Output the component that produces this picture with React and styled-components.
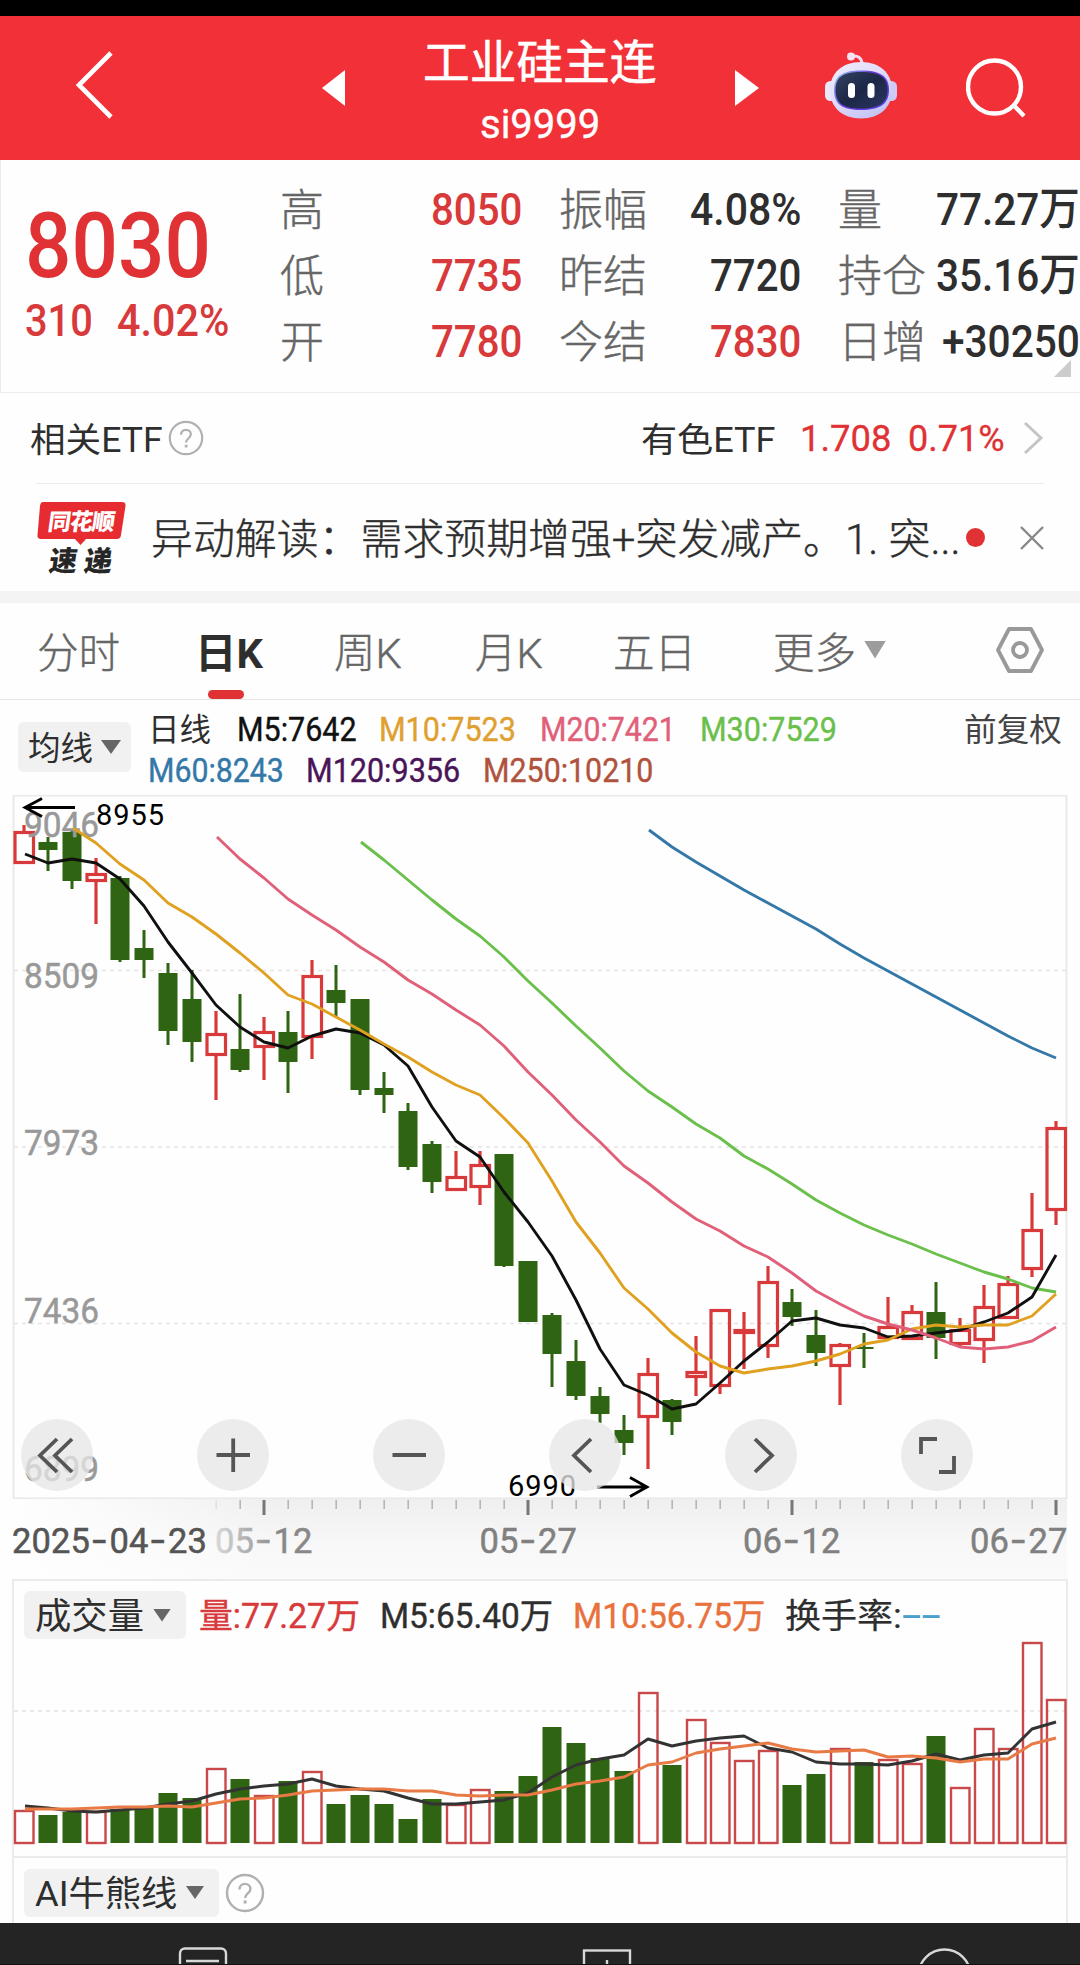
import React, { useLayoutEffect, useRef } from "react";
import styled, { createGlobalStyle } from "styled-components";

const RED = "#e03134";
const UP = "#d8393b";
const DOWN = "#2f6412";
const INK = "#2e2e2e";
const FONT = 'Roboto, "Noto Sans CJK SC", sans-serif';

const Global = createGlobalStyle`
  * { box-sizing: border-box; }
  body { margin: 0; background: #fff; font-family: ${FONT}; }
  svg { display: block; }
`;

const Page = styled.div`
  width: 1080px;
  height: 1965px;
  overflow: hidden;
  display: flex;
  flex-direction: column;
  background: #fefefe;
  color: ${INK};
`;

/* Text condensed or widened to a given advance width */
const FitBox = styled.span`
  display: block;
  flex: none;
  width: ${(p) => p.$w}px;
  font-size: ${(p) => p.$size}px;
  font-weight: ${(p) => p.$weight || 400};
  line-height: ${(p) => p.$lh || 44}px;
  color: ${(p) => p.$color || "inherit"};
  margin-left: ${(p) => p.$ml || 0}px;
  padding-top: ${(p) => p.$drop || 0}px;
  -webkit-text-stroke: ${(p) => p.$stroke || 0}px;
  white-space: pre;
`;
const FitInner = styled.span`
  display: inline-block;
  transform-origin: 0 50%;
`;
function Fit({ w, size, weight, lh, color, ml, drop, stroke, children }) {
  const ref = useRef(null);
  useLayoutEffect(() => {
    const el = ref.current;
    el.style.transform = `scaleX(${w / el.offsetWidth})`;
  }, [w, children]);
  return (
    <FitBox $w={w} $size={size} $weight={weight} $lh={lh} $color={color} $ml={ml} $drop={drop} $stroke={stroke}>
      <FitInner ref={ref}>{children}</FitInner>
    </FitBox>
  );
}

/* ---------- header ---------- */
const StatusStrip = styled.div`
  height: 16px;
  flex: none;
  background: #000;
`;
const Header = styled.header`
  height: 144px;
  flex: none;
  background: #f23038;
  color: #fff;
  display: grid;
  grid-template-columns: 322px 23px 390px 24px 66px 72px 69px 1fr;
  align-items: center;
`;
const BackIcon = styled.svg`
  margin-left: 74px;
  margin-top: -6px;
`;
const TitleBlock = styled.div`
  align-self: start;
  padding-top: 22px;
  display: flex;
  flex-direction: column;
  align-items: center;
  gap: 14px;
`;
const SearchIcon = styled.svg`
  grid-column: 8;
`;
const RobotIcon = styled.svg`
  grid-column: 6;
  margin-top: -6px;
`;

/* ---------- quote ---------- */
const Quote = styled.section`
  position: relative;
  height: 233px;
  flex: none;
  border-bottom: 1px solid #ededed;
  border-left: 1px solid #ececec;
  display: grid;
  grid-template-columns: 279px 242px 37px 242px 37px 242px;
`;
const PriceBlock = styled.div`
  padding: 46px 0 0 24px;
`;
const ChangeRow = styled.div`
  display: flex;
  margin-top: 13px;
`;
const StatColumn = styled.div`
  padding-top: 17px;
  grid-column: ${(p) => p.$col};
`;
const StatRow = styled.div`
  height: 66px;
  display: flex;
  align-items: center;
  justify-content: space-between;
`;
const StatLabel = styled.span`
  font-size: 44px;
  font-weight: 300;
  line-height: 60px;
  padding-top: 2px;
  -webkit-text-stroke: 0.4px;
  color: #666;
  white-space: nowrap;
`;
const Corner = styled.i`
  position: absolute;
  right: 9px;
  bottom: 15px;
  border-left: 17px solid transparent;
  border-bottom: 17px solid #ccc;
`;

/* ---------- related / news ---------- */
const EtfRow = styled.section`
  height: 91px;
  flex: none;
  margin: 0 36px;
  border-bottom: 1px solid #ececec;
  display: flex;
  align-items: center;
`;
const Shift = styled.div`
  display: flex;
  align-items: center;
  margin-left: ${(p) => p.$x || 0}px;
`;
const Spacer = styled.div`
  flex: 1;
`;
const NewsRow = styled.section`
  height: 107px;
  flex: none;
  display: flex;
  align-items: center;
  padding: 0 36px;
`;
const Dot = styled.i`
  width: 19px;
  height: 19px;
  border-radius: 50%;
  background: ${RED};
  margin-left: 6px;
`;
const Band = styled.div`
  height: 12px;
  flex: none;
  background: #f4f4f4;
`;

/* ---------- tabs ---------- */
const Tabs = styled.nav`
  height: 97px;
  flex: none;
  border-bottom: 1px solid #e6e6e6;
  padding-left: 37px;
  display: grid;
  grid-template-columns: 158px 139px 141px 138px 160px 223px 1fr;
`;
const Tab = styled.div`
  position: relative;
  display: flex;
  align-items: center;
  padding-bottom: 3px;
  font-size: 41.5px;
  white-space: nowrap;
  font-weight: ${(p) => (p.$on ? 700 : 300)};
  -webkit-text-stroke: ${(p) => (p.$on ? 0 : 0.4)}px;
  color: ${(p) => (p.$on ? INK : "#666")};
  &::after {
    content: "";
    display: ${(p) => (p.$on ? "block" : "none")};
    position: absolute;
    left: 13px;
    bottom: 0;
    width: 36px;
    height: 9px;
    border-radius: 5px;
    background: ${RED};
  }
`;
const Caret = styled.i`
  flex: none;
  width: ${(p) => p.$w}px;
  height: ${(p) => p.$h}px;
  margin-left: ${(p) => p.$ml}px;
  background: ${(p) => p.$c || "#666"};
  clip-path: polygon(0 0, 100% 0, 50% 100%);
`;

/* ---------- averages ---------- */
const Averages = styled.section`
  height: 95px;
  flex: none;
  display: flex;
  align-items: flex-start;
  padding-left: 18px;
`;
const Picker = styled.button`
  flex: none;
  display: flex;
  align-items: center;
  border: 0;
  border-radius: 6px;
  background: #f1f1f1;
  font-family: inherit;
  text-align: left;
  color: ${INK};
  padding: 0 0 0 ${(p) => p.$pad}px;
  width: ${(p) => p.$w}px;
  height: ${(p) => p.$h}px;
  margin-top: ${(p) => p.$mt || 0}px;
`;
const Legend = styled.div`
  padding-top: 10px;
  margin-left: 17px;
  flex: 1;
`;
const LegendLine = styled.div`
  display: flex;
  height: 41px;
`;

/* ---------- charts ---------- */
const KChart = styled.section`
  position: relative;
  height: 704px;
  flex: none;
`;
const Controls = styled.div`
  position: absolute;
  left: 21px;
  bottom: 8px;
  display: flex;
  gap: 104px;
`;
const RoundButton = styled.button`
  width: 72px;
  height: 72px;
  padding: 0;
  border: 0;
  border-radius: 50%;
  background: rgba(230, 230, 230, 0.77);
`;
const Axis = styled.div`
  height: 80px;
  flex: none;
  margin: 0 13px;
  background: linear-gradient(90deg, #fefefe 0, rgba(254, 254, 254, 0.6) 120px, rgba(254, 254, 254, 0) 260px),
    linear-gradient(180deg, #efefef 0, #f8f8f8 60%, #fafafa 100%);
`;
const Panel = styled.section`
  flex: none;
  margin: 0 12px 0 12px;
  height: ${(p) => p.$h}px;
  border: 2px solid #ebebeb;
  border-bottom: 0;
`;
const PanelHead = styled.div`
  display: flex;
  align-items: center;
  padding: ${(p) => p.$pt}px 0 0 10px;
  height: 59px;
`;
const BottomBar = styled.footer`
  flex: none;
  height: 42px;
  background: #242424;
  border-bottom: 1px solid #111;
`;

/* [up, high, bodyTop, bodyBottom, low, volumeTop] */
const candles = [
  [1, 825, 831, 864, 864, 1810], [0, 837, 842, 850, 871, 1815], [0, 829, 832, 881, 889, 1812],
  [1, 858, 873, 882, 924, 1811], [0, 876, 878, 960, 962, 1809], [0, 930, 948, 960, 978, 1808],
  [0, 963, 973, 1031, 1045, 1793], [0, 970, 999, 1042, 1062, 1798], [1, 1011, 1033, 1056, 1100, 1768],
  [0, 994, 1049, 1070, 1072, 1779], [1, 1017, 1031, 1048, 1080, 1795], [0, 1011, 1032, 1062, 1093, 1781],
  [1, 960, 975, 1038, 1059, 1771], [0, 965, 990, 1003, 1017, 1804], [0, 999, 999, 1090, 1095, 1795],
  [0, 1072, 1088, 1095, 1113, 1804], [0, 1103, 1111, 1167, 1170, 1819], [0, 1141, 1144, 1182, 1193, 1799],
  [1, 1151, 1176, 1191, 1191, 1804], [1, 1151, 1164, 1188, 1205, 1789], [0, 1154, 1154, 1266, 1267, 1791],
  [0, 1261, 1261, 1322, 1322, 1776], [0, 1313, 1315, 1354, 1387, 1727], [0, 1340, 1361, 1396, 1400, 1743],
  [0, 1387, 1396, 1414, 1423, 1758], [0, 1415, 1430, 1443, 1455, 1771], [1, 1358, 1373, 1418, 1469, 1692],
  [0, 1399, 1400, 1422, 1435, 1765], [1, 1336, 1371, 1378, 1396, 1719], [1, 1309, 1309, 1387, 1394, 1742],
  [1, 1312, 1329, 1334, 1369, 1760], [1, 1266, 1281, 1347, 1358, 1750], [0, 1289, 1302, 1317, 1326, 1785],
  [0, 1310, 1335, 1353, 1366, 1774], [1, 1343, 1344, 1367, 1405, 1748], [0, 1333, 1347, 1349, 1368, 1762],
  [1, 1297, 1326, 1339, 1339, 1759], [1, 1305, 1311, 1340, 1340, 1763], [0, 1282, 1312, 1338, 1359, 1736],
  [1, 1318, 1329, 1345, 1346, 1787], [1, 1285, 1306, 1341, 1363, 1728], [1, 1276, 1283, 1319, 1319, 1748],
  [1, 1193, 1229, 1270, 1277, 1642], [1, 1121, 1127, 1211, 1225, 1699],
];

const averages = [
  { color: "#3478a8", from: 26, y: [830, 847, 862, 876, 890, 903, 916, 929, 944, 958, 971, 984, 997, 1010, 1023, 1036, 1048, 1058] },
  { color: "#6bbf4b", from: 14, y: [842, 860, 880, 900, 919, 936, 957, 981, 1003, 1026, 1048, 1071, 1091, 1107, 1124, 1138, 1156, 1169, 1184, 1200, 1213, 1225, 1235, 1244, 1254, 1263, 1272, 1279, 1288, 1292] },
  { color: "#101010", from: 0, y: [854, 863, 859, 863, 879, 906, 942, 973, 1005, 1027, 1042, 1048, 1036, 1029, 1033, 1045, 1066, 1107, 1141, 1157, 1192, 1222, 1256, 1300, 1349, 1385, 1395, 1409, 1404, 1383, 1361, 1342, 1321, 1318, 1325, 1328, 1337, 1336, 1333, 1330, 1322, 1313, 1297, 1255] },
  { color: "#e0a020", from: 2, y: [828, 843, 864, 880, 903, 917, 934, 953, 973, 995, 1004, 1017, 1030, 1044, 1057, 1072, 1085, 1095, 1118, 1143, 1181, 1222, 1253, 1288, 1309, 1333, 1352, 1366, 1373, 1369, 1366, 1361, 1354, 1344, 1340, 1329, 1325, 1327, 1325, 1325, 1316, 1294] },
  { color: "#e0607a", from: 8, y: [837, 859, 878, 899, 915, 930, 947, 962, 980, 994, 1010, 1025, 1046, 1072, 1095, 1120, 1142, 1166, 1183, 1202, 1219, 1231, 1246, 1257, 1273, 1291, 1304, 1316, 1324, 1330, 1338, 1347, 1349, 1347, 1341, 1327] },
];
const volumeAverages = [
  { color: "#333", from: 0, y: [1806, 1808, 1811, 1812, 1810, 1808, 1804, 1801, 1794, 1789, 1786, 1784, 1779, 1786, 1789, 1791, 1798, 1804, 1804, 1802, 1800, 1793, 1777, 1765, 1759, 1755, 1739, 1746, 1741, 1738, 1736, 1748, 1752, 1762, 1764, 1764, 1765, 1761, 1754, 1760, 1755, 1753, 1729, 1722] },
  { color: "#e87a45", from: 0, y: [1809, 1809, 1809, 1808, 1807, 1807, 1806, 1807, 1803, 1799, 1798, 1795, 1791, 1790, 1789, 1789, 1791, 1791, 1795, 1796, 1795, 1795, 1790, 1784, 1781, 1777, 1765, 1762, 1753, 1749, 1746, 1743, 1749, 1752, 1751, 1750, 1757, 1756, 1758, 1762, 1759, 1759, 1744, 1738] },
];
const cx = (i) => 24 + 24 * i;

const Lines = ({ data }) =>
  data.map((l) => (
    <polyline
      key={l.color}
      fill="none"
      stroke={l.color}
      strokeWidth="2.9"
      strokeLinejoin="round"
      points={l.y.map((y, k) => `${cx(l.from + k) + (k === 0 ? 1 : 0)},${y}`).join(" ")}
    />
  ));

const Candle = ({ i, d }) => {
  const [up, hi, top, bot, lo] = d;
  const x = cx(i);
  if (!up)
    return (
      <g fill={DOWN}>
        <rect x={x - 1.5} y={hi} width="3" height={lo - hi} />
        <rect x={x - 9.5} y={top} width="19" height={bot - top} />
      </g>
    );
  return (
    <g stroke={UP} strokeWidth="3.2" fill="none">
      <path d={`M${x} ${hi}V${top}M${x} ${bot}V${lo}`} />
      <rect x={x - 9} y={top + 1.5} width="18.5" height={Math.max(bot - top - 3, 1)} />
    </g>
  );
};

const AxisLabel = ({ x, text, fill }) => (
  <text y="1553" fontFamily="Roboto" fontSize="34.5" fontWeight="400" fill={fill} stroke={fill} strokeWidth="0.5">
    {[...text].map((c, k) =>
      c === "-" ? (
        <tspan key={k} x={x + k * 19.5 + 0.5} fontFamily="Inter" fontSize="38">{c}</tspan>
      ) : (
        <tspan key={k} x={x + k * 19.5}>{c}</tspan>
      )
    )}
  </text>
);

const Help = ({ r, color }) => (
  <svg width={2 * r + 4} height={2 * r + 4} viewBox="0 0 40 40" fill="none" stroke={color} strokeWidth="2.4">
    <circle cx="20" cy="20" r="18" />
    <path d="M14.5 16.5c0-3.6 2.4-5.6 5.5-5.6s5.4 2 5.4 5c0 4.2-5.3 4.6-5.3 9" />
    <path d="M20.1 27.5v3" strokeWidth="3" />
  </svg>
);

const Stat = ({ label, value, w, color }) => (
  <StatRow>
    <StatLabel>{label}</StatLabel>
    <Fit w={w} size={45} weight={500} color={color || INK}>{value}</Fit>
  </StatRow>
);

const controlPaths = [
  "M36 20L19 36.5L36 53M51 20L34 36.5L51 53",
  "M19.500 36H53M36.200 19.500V53",
  "M19.500 36H53",
  "M42 20L25 36.500L42 53",
  "M30 20L47 36.500L30 53",
  "M20 35V20H36M38 53H53V37",
];

export default function App() {
  return (
    <Page>
      <Global />
      <StatusStrip />
      <Header>
        <BackIcon width="42" height="70" viewBox="0 0 42 70" fill="none" stroke="#fff" strokeWidth="4.6">
          <path d="M37 3L5 35L37 67" />
        </BackIcon>
        <svg width="23" height="36" viewBox="0 0 23 36" fill="#fff"><path d="M23 0V36L0 18z" /></svg>
        <TitleBlock>
          <Fit w={234} size={46.5} lh={50} stroke={0.6}>工业硅主连</Fit>
          <Fit w={120} size={41} lh={44} stroke={0.4}>si9999</Fit>
        </TitleBlock>
        <svg width="24" height="36" viewBox="0 0 24 36" fill="#fff"><path d="M0 0V36L24 18z" /></svg>
        <RobotIcon width="72" height="67" viewBox="0 0 72 67">
          <defs>
            <linearGradient id="shell" x1="0" y1="0" x2="0.7" y2="1">
              <stop offset="0" stopColor="#f4eefc" />
              <stop offset="0.6" stopColor="#dcd8fa" />
              <stop offset="1" stopColor="#c3c3f3" />
            </linearGradient>
            <linearGradient id="rim" x1="0" y1="0" x2="1" y2="0.6">
              <stop offset="0" stopColor="#8fd8f0" />
              <stop offset="0.55" stopColor="#6a35d8" />
              <stop offset="1" stopColor="#5a3fe0" />
            </linearGradient>
            <linearGradient id="visor" x1="0" y1="0" x2="1" y2="1">
              <stop offset="0" stopColor="#364263" />
              <stop offset="0.5" stopColor="#1c2746" />
              <stop offset="1" stopColor="#2c3560" />
            </linearGradient>
          </defs>
          <path d="M26 4.500C33 3 37 6 37 12" fill="none" stroke="#f3dcee" strokeWidth="3" />
          <circle cx="26" cy="4.500" r="4" fill="#f6e2f2" />
          <rect x="0" y="29" width="12" height="20" rx="5.500" fill="#ece6fb" />
          <rect x="60" y="29" width="12" height="20" rx="5.500" fill="#cfcaf5" />
          <path d="M36 10C55 10 67 21 67 38S55 66.500 36 66.500S5 55 5 38S17 10 36 10z" fill="url(#shell)" />
          <path d="M36 18.500C55 18.500 64 24 64 38S55 58 36 58S9 52 9 38S17 18.500 36 18.500z" fill="url(#rim)" />
          <path d="M36 20C54 20 62.500 25 62.500 38S54 56.500 36 56.500S10.500 51 10.500 38S18 20 36 20z" fill="url(#visor)" />
          <rect x="23" y="31" width="7" height="15" rx="3.500" fill="#fff" />
          <rect x="42.500" y="31" width="7" height="15" rx="3.500" fill="#fff" />
        </RobotIcon>
        <SearchIcon width="62" height="62" viewBox="0 0 62 62" fill="none" stroke="#fff" strokeWidth="4.4">
          <circle cx="28.500" cy="30" r="26.500" />
          <path d="M47 47.500L58 59" />
        </SearchIcon>
      </Header>

      <Quote>
        <PriceBlock>
          <Fit w={186} size={91} lh={80} weight={500} color={RED}>8030</Fit>
          <ChangeRow>
            <Fit w={68} size={45} color={UP} weight={500}>310</Fit>
            <Fit w={112} size={45} color={UP} weight={500} ml={24}>4.02%</Fit>
          </ChangeRow>
        </PriceBlock>
        <StatColumn $col={2}>
          <Stat label="高" value="8050" w={91} color={UP} />
          <Stat label="低" value="7735" w={91} color={UP} />
          <Stat label="开" value="7780" w={91} color={UP} />
        </StatColumn>
        <StatColumn $col={4}>
          <Stat label="振幅" value="4.08%" w={111} />
          <Stat label="昨结" value="7720" w={91} />
          <Stat label="今结" value="7830" w={91} color={UP} />
        </StatColumn>
        <StatColumn $col={6}>
          <Stat label="量" value="77.27万" w={144} />
          <Stat label="持仓" value="35.16万" w={144} />
          <Stat label="日增" value="+30250" w={138} />
        </StatColumn>
        <Corner />
      </Quote>

      <EtfRow>
        <Shift $x={-6}>
          <Fit w={133} size={34.5} drop={3}>相关ETF</Fit>
          <Shift $x={5}><Help r={16} color="#b0b0b0" /></Shift>
        </Shift>
        <Spacer />
        <Fit w={135} size={34.5} drop={3}>有色ETF</Fit>
        <Fit w={91} size={36} ml={24} drop={2} stroke={0.3} color={RED}>1.708</Fit>
        <Fit w={97} size={36} ml={17} drop={2} stroke={0.3} color={RED}>0.71%</Fit>
        <Shift $x={18}>
          <svg width="21" height="34" viewBox="0 0 21 34" fill="none" stroke="#c4c4c4" strokeWidth="3"><path d="M2 2L18 17L2 32" /></svg>
        </Shift>
      </EtfRow>

      <NewsRow>
        <svg width="90" height="74" viewBox="36 500 90 74" overflow="visible" fontFamily="Noto Sans CJK SC" fontWeight="900">
          <path d="M43 501H122Q126 501 125.500 505L121 534Q120.500 538 117 538H86L80.500 544L75 538H41Q37 538 37.500 534L40 505Q40.500 501 43 501z" fill="#e62c30" />
          <text transform="translate(47 529) skewX(-8)" fontSize="23" textLength="67" fill="#fff">同花顺</text>
          <text transform="translate(48 569.500) skewX(-8)" fontSize="28" textLength="63" fill="#262626">速递</text>
        </svg>
        <Fit w={809} size={42} ml={25} weight={300} lh={50} drop={5} stroke={0.4}>异动解读：需求预期增强+突发减产。1. 突...</Fit>
        <Dot />
        <Spacer />
        <svg width="24" height="24" viewBox="0 0 24 24" stroke="#888" strokeWidth="2.400"><path d="M1 1L23 23M23 1L1 23" /></svg>
      </NewsRow>
      <Band />

      <Tabs>
        <Tab>分时</Tab>
        <Tab $on>日K</Tab>
        <Tab>周K</Tab>
        <Tab>月K</Tab>
        <Tab>五日</Tab>
        <Tab>更多<Caret $w={22} $h={18} $ml={8} $c="#9c9c9c" /></Tab>
        <Tab>
          <svg width="48" height="46" viewBox="0 0 48 46" fill="none" stroke="#999" strokeWidth="3.800" strokeLinejoin="round">
            <path d="M13 2H35L46 23L35 44H13L2 23z" />
            <circle cx="24" cy="23" r="7" />
          </svg>
        </Tab>
      </Tabs>

      <Averages>
        <Picker $w={113} $h={50} $pad={10} $mt={22}>
          <Fit w={65} size={32.5} drop={3}>均线</Fit>
          <Caret $w={20} $h={14} $ml={8} />
        </Picker>
        <Legend>
          <LegendLine>
            <Fit w={63} size={32} lh={40}>日线</Fit>
            <Fit w={120} size={32.5} lh={40} ml={26} stroke={0.4} color="#111">M5:7642</Fit>
            <Fit w={137} size={32.5} lh={40} ml={22} stroke={0.4} color="#e0a030">M10:7523</Fit>
            <Fit w={136} size={32.5} lh={40} ml={24} stroke={0.4} color="#e0607a">M20:7421</Fit>
            <Fit w={137} size={32.5} lh={40} ml={24} stroke={0.4} color="#6bbf4b">M30:7529</Fit>
            <Fit w={98} size={32} lh={40} ml={127} color="#444">前复权</Fit>
          </LegendLine>
          <LegendLine>
            <Fit w={136} size={32.5} lh={40} stroke={0.4} color="#3478a8">M60:8243</Fit>
            <Fit w={154} size={32.5} lh={40} ml={22} stroke={0.4} color="#4a1458">M120:9356</Fit>
            <Fit w={170} size={32.5} lh={40} ml={23} stroke={0.4} color="#b0523c">M250:10210</Fit>
          </LegendLine>
        </Legend>
      </Averages>

      <KChart>
        <svg width="1080" height="704" viewBox="0 795 1080 704">
          <rect x="13.500" y="795.500" width="1053" height="703" fill="none" stroke="#e9e9e9" strokeWidth="2" />
          <path d="M14 970.500H1066M14 1147H1066M14 1323.500H1066" stroke="#e4e4e4" strokeWidth="1.300" strokeDasharray="4 4" />
          {candles.map((d, i) => <Candle key={i} i={i} d={d} />)}
          <g fontFamily="Roboto" fontSize="34.500" fill="#999" stroke="#999" strokeWidth="0.500">
            <text x="24" y="837" textLength="75" lengthAdjust="spacingAndGlyphs">9046</text>
            <text x="24" y="988" textLength="75" lengthAdjust="spacingAndGlyphs">8509</text>
            <text x="24" y="1155" textLength="75" lengthAdjust="spacingAndGlyphs">7973</text>
            <text x="24" y="1323" textLength="75" lengthAdjust="spacingAndGlyphs">7436</text>
            <text x="24" y="1481" textLength="75" lengthAdjust="spacingAndGlyphs">6899</text>
          </g>
          <Lines data={averages} />
          <g fontFamily="Roboto" fontSize="29" fill="#000">
            <text x="96" y="824.500" textLength="68">8955</text>
            <text x="508" y="1496" textLength="68">6990</text>
          </g>
          <path d="M75 807.500H25M42 798.500L25 807.500L42 816.500M597 1487H647M630 1477.500L647 1487L630 1496.500" fill="none" stroke="#000" strokeWidth="2.800" />
        </svg>
        <Controls>
          {controlPaths.map((d) => (
            <RoundButton key={d}>
              <svg width="72" height="72" viewBox="0 0 72 72" fill="none" stroke="#555" strokeWidth="3.800"><path d={d} /></svg>
            </RoundButton>
          ))}
        </Controls>
      </KChart>

      <Axis>
        <svg width="1054" height="80" viewBox="13 1499 1054 80">
          <defs>
            <linearGradient id="fade" gradientUnits="userSpaceOnUse" x1="212" x2="280" y1="0" y2="0">
              <stop offset="0" stopColor="#dcdcdc" />
              <stop offset="1" stopColor="#888" />
            </linearGradient>
          </defs>
          {candles.map((_, i) => {
            if (i < 8) return null;
            const major = (i - 10) % 11 === 0;
            return (
              <rect key={i} x={cx(i) - (major ? 1.5 : 0.5)} y="1500" width={major ? 3 : 1.3} height={major ? 15 : 9} fill={major ? "#777" : i === 8 ? "#ddd" : "#a8a8a8"} />
            );
          })}
          <AxisLabel x={12} text="2025-04-23" fill="#555" />
          <AxisLabel x={215} text="05-12" fill="url(#fade)" />
          <AxisLabel x={479.5} text="05-27" fill="#808080" />
          <AxisLabel x={743} text="06-12" fill="#808080" />
          <AxisLabel x={970} text="06-27" fill="#808080" />
        </svg>
      </Axis>

      <Panel $h={277}>
        <PanelHead $pt={9}>
          <Picker $w={162} $h={48} $pad={11}>
            <Fit w={109} size={36} drop={3}>成交量</Fit>
            <Caret $w={18} $h={13} $ml={9} />
          </Picker>
          <Fit w={161} size={34.5} ml={13} drop={1} stroke={0.4} color={UP}>量:77.27万</Fit>
          <Fit w={173} size={34.5} ml={20} drop={1} stroke={0.4}>M5:65.40万</Fit>
          <Fit w={192} size={34.5} ml={20} drop={1} stroke={0.4} color="#e8713c">M10:56.75万</Fit>
          <Fit w={117} size={34.5} ml={20} drop={1} stroke={0.2}>换手率:</Fit>
          <Fit w={39} size={38} color="#4a9fd0">--</Fit>
        </PanelHead>
        <svg width="1052" height="216" viewBox="14 1640 1052 216" overflow="visible">
          <path d="M14 1711H1066" stroke="#e2e2e2" strokeWidth="1.300" strokeDasharray="4 4" />
          {candles.map(([up, , , , , v], i) =>
            up ? (
              <rect key={i} x={cx(i) - 9} y={v + 1} width="18.500" height={1843 - v - 1} fill="none" stroke="#c9484a" strokeWidth="2.400" />
            ) : (
              <rect key={i} x={cx(i) - 9.5} y={v} width="19" height={1843 - v} fill={DOWN} />
            )
          )}
          <Lines data={volumeAverages} />
        </svg>
      </Panel>

      <Panel $h={67}>
        <PanelHead $pt={10}>
          <Picker $w={195} $h={48} $pad={11}>
            <Fit w={142} size={35.5} drop={2}>AI牛熊线</Fit>
            <Caret $w={18} $h={13} $ml={9} />
          </Picker>
          <Shift $x={6}><Help r={18} color="#b0b0b0" /></Shift>
        </PanelHead>
      </Panel>

      <BottomBar>
        <svg width="1080" height="41" viewBox="0 1923 1080 41" fill="none" stroke="#d8d8d8" strokeWidth="2.400">
          <rect x="180" y="1948.500" width="46" height="40" rx="5" />
          <path d="M186 1961H219" />
          <rect x="584" y="1950.500" width="46" height="40" />
          <path d="M607 1960V1970" />
          <circle cx="944.500" cy="1975.500" r="26" />
        </svg>
      </BottomBar>
    </Page>
  );
}
